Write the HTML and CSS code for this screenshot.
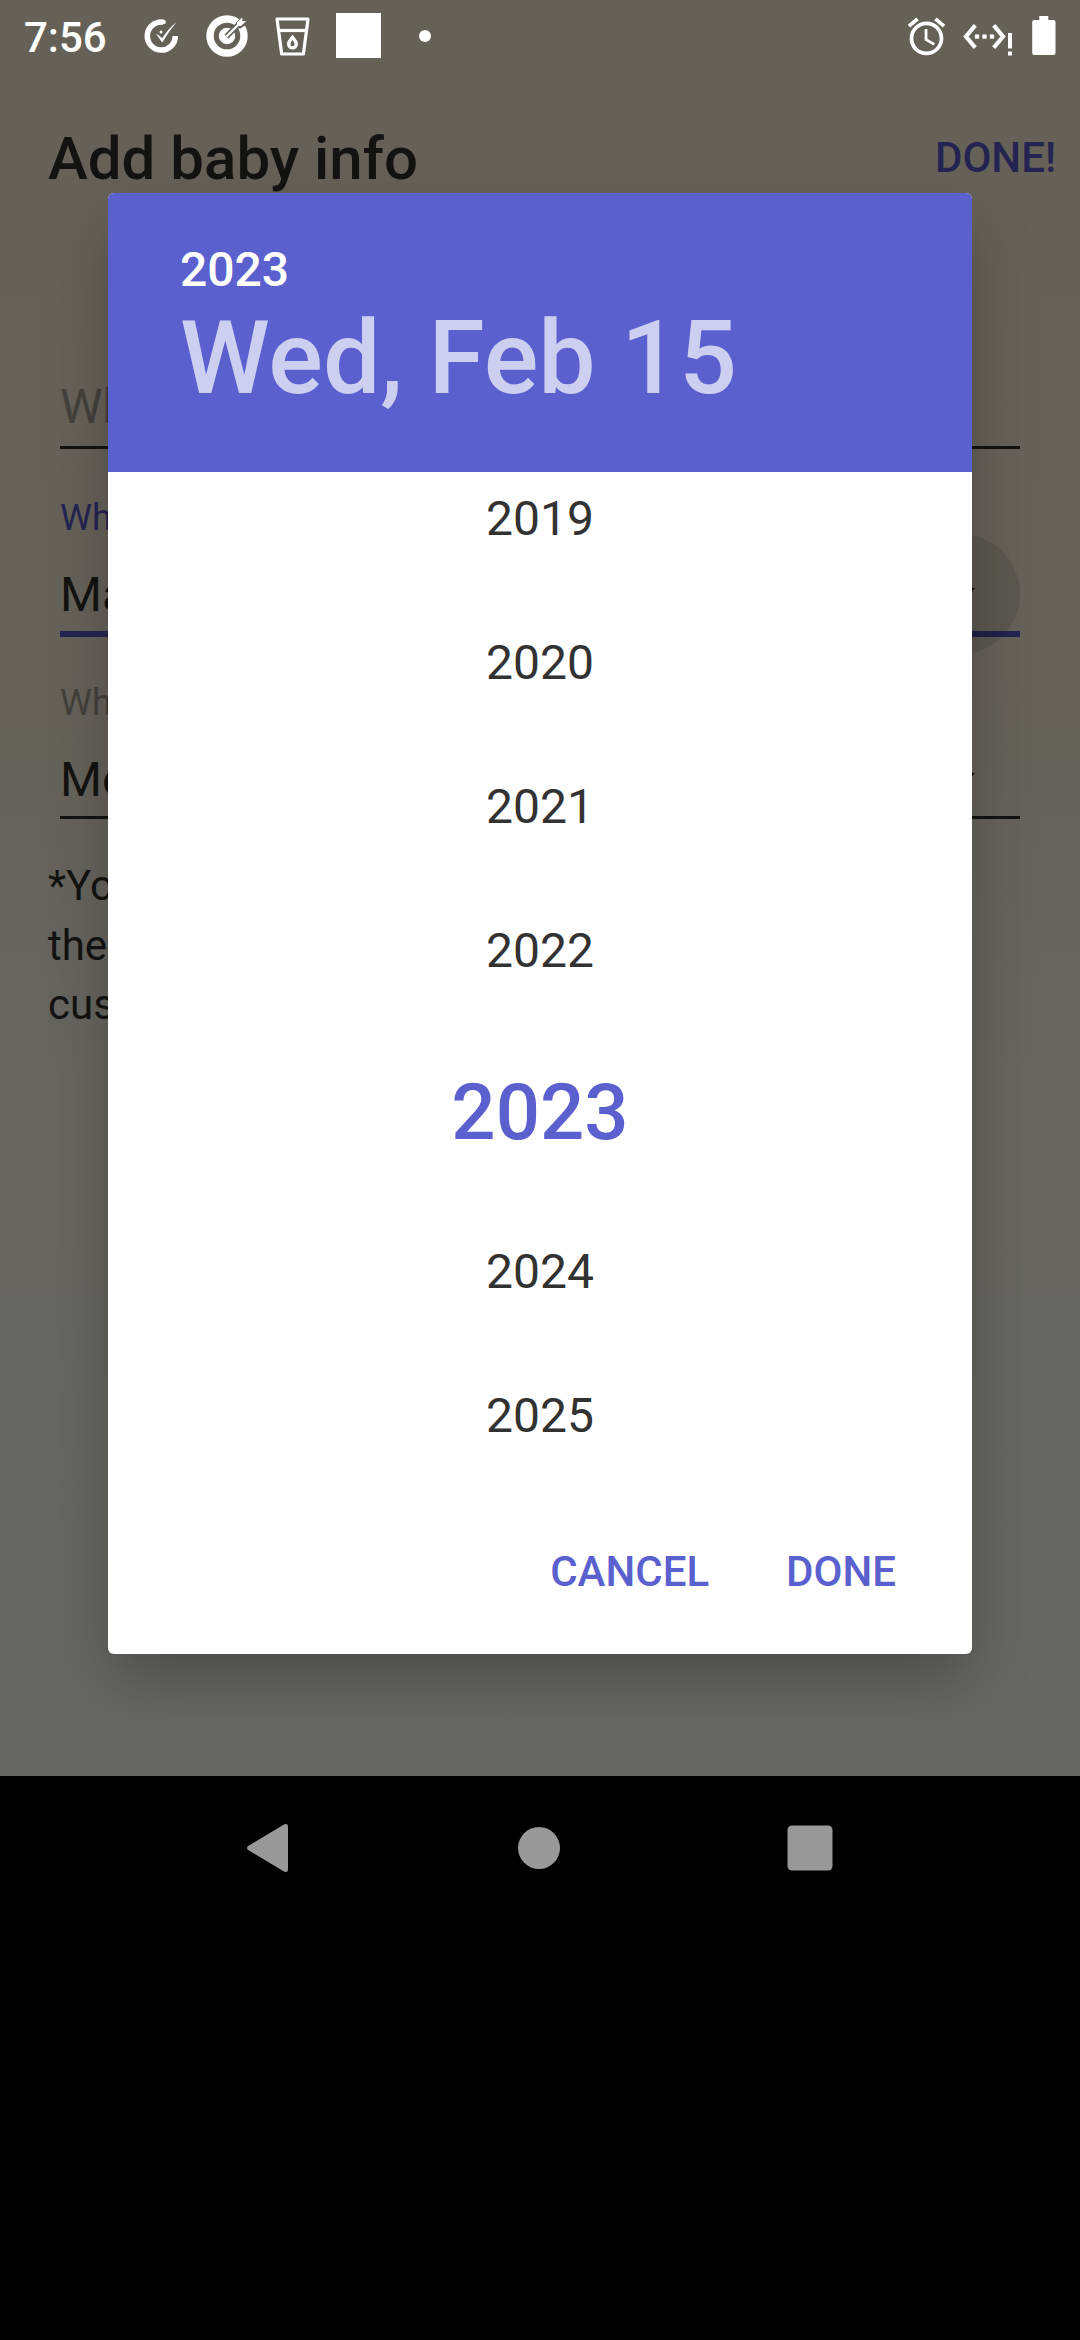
FILE: index.html
```html
<!DOCTYPE html>
<html lang="en">
<head>
<meta charset="utf-8">
<title>Add baby info</title>
<link rel="stylesheet" href="styles.css">
</head>
<body>
<div class="screen">
  <div class="app">
    <div class="status">
      <span class="clock">7:56</span>
      <svg class="s-check" width="40" height="40" viewBox="0 0 40 40"><path d="M22.3 6.2A14 14 0 1 0 34.3 20" fill="none" stroke="#fff" stroke-width="5.6" stroke-linecap="butt"/><circle cx="22.6" cy="5.9" r="2.2" fill="#fff"/><path d="M15 17.8L18 19.5L21.200 22.300Q27 13 35.600 5.700Q28.500 14.500 21.200 26.400Z" fill="#fff"/><circle cx="20" cy="16" r="1.500" fill="#fff"/></svg>
      <svg class="s-target" width="44" height="44" viewBox="0 0 44 44"><circle cx="22" cy="22" r="17" fill="none" stroke="#fff" stroke-width="7.400"/><circle cx="22" cy="22" r="8.200" fill="#fff"/><path d="M21.500 22.500L34 10" stroke="#666158" stroke-width="5.500"/><path d="M31 14L31.300 8.200L38 1.500L44 9L35.500 14.500Z" fill="#666158"/><path d="M21.500 22.500L36 8" stroke="#fff" stroke-width="2.300"/><path d="M32 12V8.500L37.300 3.200V7H41.300L36 12Z" fill="#fff"/></svg>
      <svg class="s-cup" width="36" height="40" viewBox="0 0 36 40"><path d="M2 2H33L28.400 37H6.700Z" fill="none" stroke="#fff" stroke-width="3.200" stroke-linejoin="round"/><path d="M3.500 13.500H31.500" stroke="#fff" stroke-width="3.200"/><path d="M17.500 17.500C14.500 21.500 12 24 12 27A5.500 5.500 0 0 0 23 27C23 24 20.500 21.500 17.500 17.500ZM17.500 23C19 25 19.500 26 19.500 27.200A2 2 0 0 1 15.500 27.200C15.500 26 16 25 17.500 23Z" fill="#fff" fill-rule="evenodd"/></svg>
      <span class="s-square"></span>
      <span class="s-dot"></span>
      <span class="grow"></span>
      <svg class="s-alarm" width="45" height="45" viewBox="0 0 24 24" fill="#fff"><path d="M22 5.720l-4.600-3.860-1.290 1.530 4.600 3.860L22 5.720zM7.880 3.390L6.600 1.860 2 5.710l1.290 1.530 4.590-3.850zM12.500 8H11v6l4.750 2.850.75-1.230-4-2.370V8zM12 4c-4.970 0-9 4.030-9 9s4.020 9 9 9a9 9 0 0 0 0-18zm0 16c-3.870 0-7-3.130-7-7s3.130-7 7-7 7 3.130 7 7-3.130 7-7 7z"/></svg>
      <svg class="s-net" width="51" height="45" viewBox="0 0 51 45" fill="#fff"><path transform="scale(1.875)" stroke="#fff" stroke-width=".25" d="M7.770 6.760L6.230 5.480.82 12l5.410 6.520 1.540-1.280L3.420 12l4.350-5.240zM7 13h2v-2H7v2zm10-2h-2v2h2v-2zm-6 2h2v-2h-2v2zm6.770-7.520l-1.540 1.280L20.580 12l-4.350 5.240 1.540 1.280L23.180 12l-5.410-6.520z"/><path d="M46 19h4v15.500h-4zM46 37.500h4v4h-4z"/></svg>
      <svg class="s-batt" width="24" height="40" viewBox="0 0 24 40"><path d="M7.300 0H16.300V4H21.500Q23.500 4 23.500 6V37Q23.500 39 21.500 39H2.200Q.2 39 .2 37V6Q.2 4 2.200 4H7.300Z" fill="#fff"/></svg>
    </div>
    <div class="appbar"><h1 class="title">Add baby info</h1><span class="action">DONE!</span></div>
    <div class="field name"><div class="value hint">Wha</div></div>
    <div class="field focused"><div class="label">Wha</div><div class="value">Ma<span class="drop ripple"><svg width="30" height="15" viewBox="0 0 30 15"><path d="M0 0H30L15 15Z"/></svg></span></div></div>
    <div class="field relation"><div class="label">Wha</div><div class="value">Mo<span class="drop"><svg width="30" height="15" viewBox="0 0 30 15"><path d="M0 0H30L15 15Z"/></svg></span></div></div>
    <div class="note">*Yo<br>the<br>cus</div>
  </div>
  <div class="nav">
    <svg width="48" height="60" viewBox="0 0 48 60"><path d="M6 27.500Q2 30 6 32.500L41 53.500Q45 55 45 51V9Q45 5 41 6.500Z" fill="#999"/></svg>
    <svg width="42" height="42" viewBox="0 0 42 42"><circle cx="21" cy="21" r="21" fill="#999"/></svg>
    <svg width="46" height="46" viewBox="0 0 46 46"><rect x=".5" y=".5" width="45" height="45" rx="4.500" fill="#999"/></svg>
  </div>
  <div class="dialog">
    <div class="head"><div class="head-year">2023</div><div class="head-date">Wed, Feb 15</div></div>
    <div class="years">
      <div class="year first">2019</div>
      <div class="year">2020</div>
      <div class="year">2021</div>
      <div class="year">2022</div>
      <div class="year selected">2023</div>
      <div class="year">2024</div>
      <div class="year">2025</div>
    </div>
    <div class="buttons"><span>CANCEL</span><span>DONE</span></div>
  </div>
</div>
</body>
</html>
```
FILE: styles.css
```css
* { box-sizing: border-box; }
body { margin: 0; background: #000; font-family: Roboto, sans-serif; }
svg { display: block; flex: none; }
.screen { position: relative; width: 1080px; height: 2340px; background: #000; overflow: hidden; }
.app { height: 1776px; background: linear-gradient(#666157, #65625a 42%, #666560 60%, #666664); color: #131311; overflow: hidden; }

.status { height: 72px; display: flex; align-items: flex-start; padding-left: 24px; padding-right: 24px; }
.clock { width: 84px; font-size: 42px; font-weight: 500; line-height: 50px; color: #fff; margin-top: 13px; }
.s-check { margin: 16px 0 0 32.5px; }
.s-target { margin: 14px 0 0 24.2px; }
.s-cup { margin: 16.500px 0 0 26.800px; }
.s-square { width: 45px; height: 45px; background: #fff; margin: 13px 0 0 24.500px; }
.s-dot { width: 12px; height: 12px; border-radius: 50%; background: #fff; margin: 30px 0 0 38px; }
.grow { flex: 1; }
.s-alarm { margin-top: 14px; }
.s-net { margin: 14px 0 0 13px; }
.s-batt { margin: 16px 0 0 19.500px; }

.appbar { height: 173px; display: flex; align-items: center; justify-content: space-between; padding: 0 24px 0 48px; }
.title { margin: 0; font-size: 60px; font-weight: 500; line-height: 70px; }
.action { font-size: 42px; font-weight: 500; line-height: 50px; margin-bottom: 2px; color: #242452; }

.field { margin: 0 60px; border-bottom: 3px solid #131311; white-space: nowrap; }
.name { margin-top: 134px; padding-bottom: 11px; }
.focused { margin-top: 48px; padding-bottom: 8px; border-bottom: 6px solid #242452; }
.relation { margin-top: 45px; padding-bottom: 8px; }
.label { font-size: 36px; line-height: 42px; margin-bottom: 28px; color: #43413b; }
.focused .label { color: #242452; }
.value { height: 56px; display: flex; justify-content: space-between; align-items: center; font-size: 48px; line-height: 56px; }
.hint { color: #43413b; }
.drop { width: 120px; height: 120px; display: flex; justify-content: center; padding-top: 54px; margin-bottom: 2px; border-radius: 50%; }
.ripple { background: rgba(0, 0, 0, .1); }
.note { margin: 37px 48px 0; font-size: 42px; line-height: 59.600px; }

.nav { height: 144px; display: flex; justify-content: space-between; align-items: center; padding: 0 247px 0 243px; }

.dialog { position: absolute; left: 108px; top: 193px; width: 864px; height: 1461px; border-radius: 6px; background: #fff; overflow: hidden; box-shadow: 0 27px 60px -6px rgba(0, 0, 0, .28); display: flex; flex-direction: column; }
.head { height: 279px; background: #5a61cf; padding: 49px 72px 0; font-weight: 500; }
.head-year { font-size: 48px; line-height: 56px; color: #fff; }
.head-date { font-size: 102px; line-height: 120px; color: #cdcff0; }
.years { height: 1008px; overflow: hidden; }
.year { height: 144px; display: flex; align-items: center; justify-content: center; font-size: 48px; color: #323232; }
.first { margin-top: -26px; }
.selected { height: 177px; padding-top: 4px; font-size: 78px; font-weight: 500; color: #5a61cf; }
.buttons { display: flex; justify-content: flex-end; gap: 77px; padding: 67px 76px 0 0; font-size: 42px; line-height: 50px; font-weight: 500; color: #5a61cf; }
```
